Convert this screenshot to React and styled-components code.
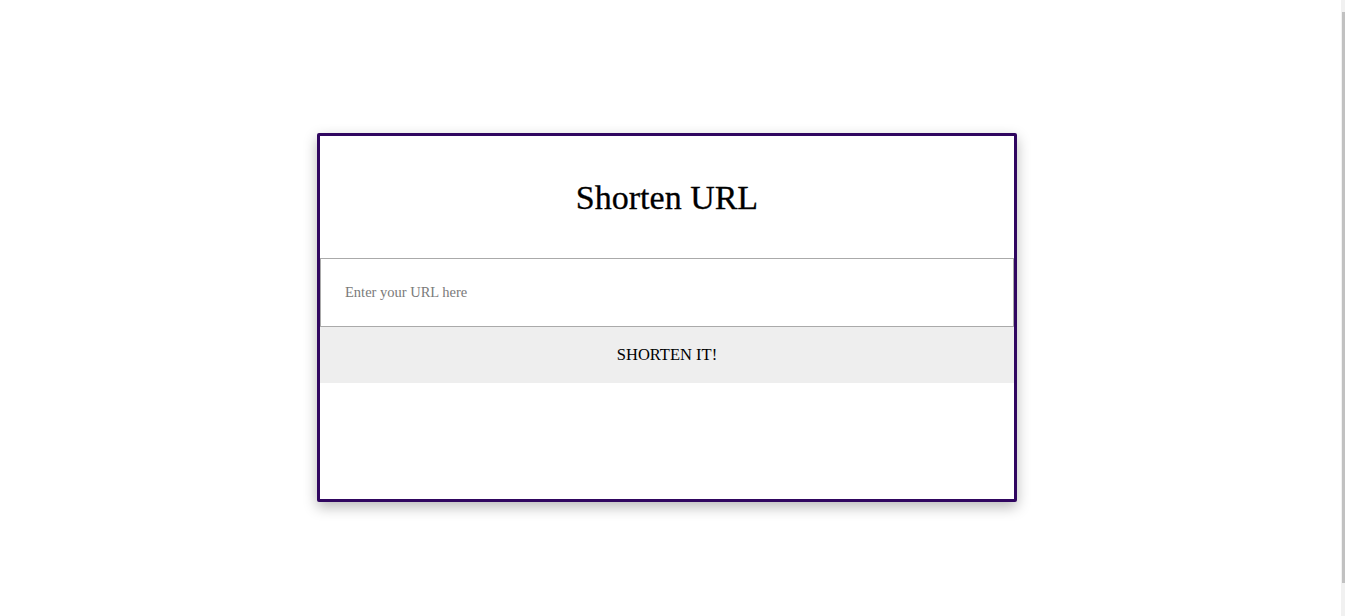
import React from "react";
import styled, { createGlobalStyle } from "styled-components";

const Global = createGlobalStyle`
  html, body { margin: 0; padding: 0; background: #fff; overflow: hidden; }
  body { font-family: "Liberation Serif", "DejaVu Serif", serif; }
`;

const Page = styled.div`
  min-height: 616px;
  display: flex;
  justify-content: center;
  align-items: flex-start;
  padding: 133px 11px 0 0;
  box-sizing: border-box;
`;

const Card = styled.div`
  width: 700px;
  height: 369px;
  box-sizing: border-box;
  border: 3px solid #300660;
  border-radius: 2px;
  background: #fff;
  box-shadow: 0 5px 14px rgba(0, 0, 0, 0.28);
  display: flex;
  flex-direction: column;
`;

const Title = styled.h1`
  margin: 0;
  height: 122px;
  display: flex;
  align-items: center;
  justify-content: center;
  font-size: 34px;
  font-weight: 400;
  color: #000;
  padding-top: 1px;
  box-sizing: border-box;
  -webkit-text-stroke: 0.3px #000;
`;

const Input = styled.input`
  display: block;
  width: 100%;
  height: 69px;
  box-sizing: border-box;
  border: 1px solid #aaa;
  padding: 0 24px;
  font-family: "Liberation Serif", "DejaVu Serif", serif;
  font-size: 14.5px;
  color: #333;
  outline: none;
  background: #fff;
  &::placeholder { color: #7a7a7a; }
`;

const Button = styled.button`
  display: block;
  width: 100%;
  height: 56px;
  border: none;
  background: #eeeeee;
  font-family: "Liberation Serif", "DejaVu Serif", serif;
  font-size: 16.5px;
  color: #000;
  cursor: pointer;
  padding: 0;
`;

const ScrollTrack = styled.div`
  position: fixed;
  top: 0;
  right: 0;
  width: 4px;
  height: 100%;
  background: #f1f1f1;
`;

const ScrollThumb = styled.div`
  position: absolute;
  top: 12px;
  right: 0;
  width: 3px;
  height: 571px;
  background: #c1c1c1;
`;

export default function App() {
  return (
    <>
      <Global />
      <Page>
        <Card>
          <Title>Shorten URL</Title>
          <Input placeholder="Enter your URL here" />
          <Button>SHORTEN IT!</Button>
        </Card>
      </Page>
      <ScrollTrack>
        <ScrollThumb />
      </ScrollTrack>
    </>
  );
}
